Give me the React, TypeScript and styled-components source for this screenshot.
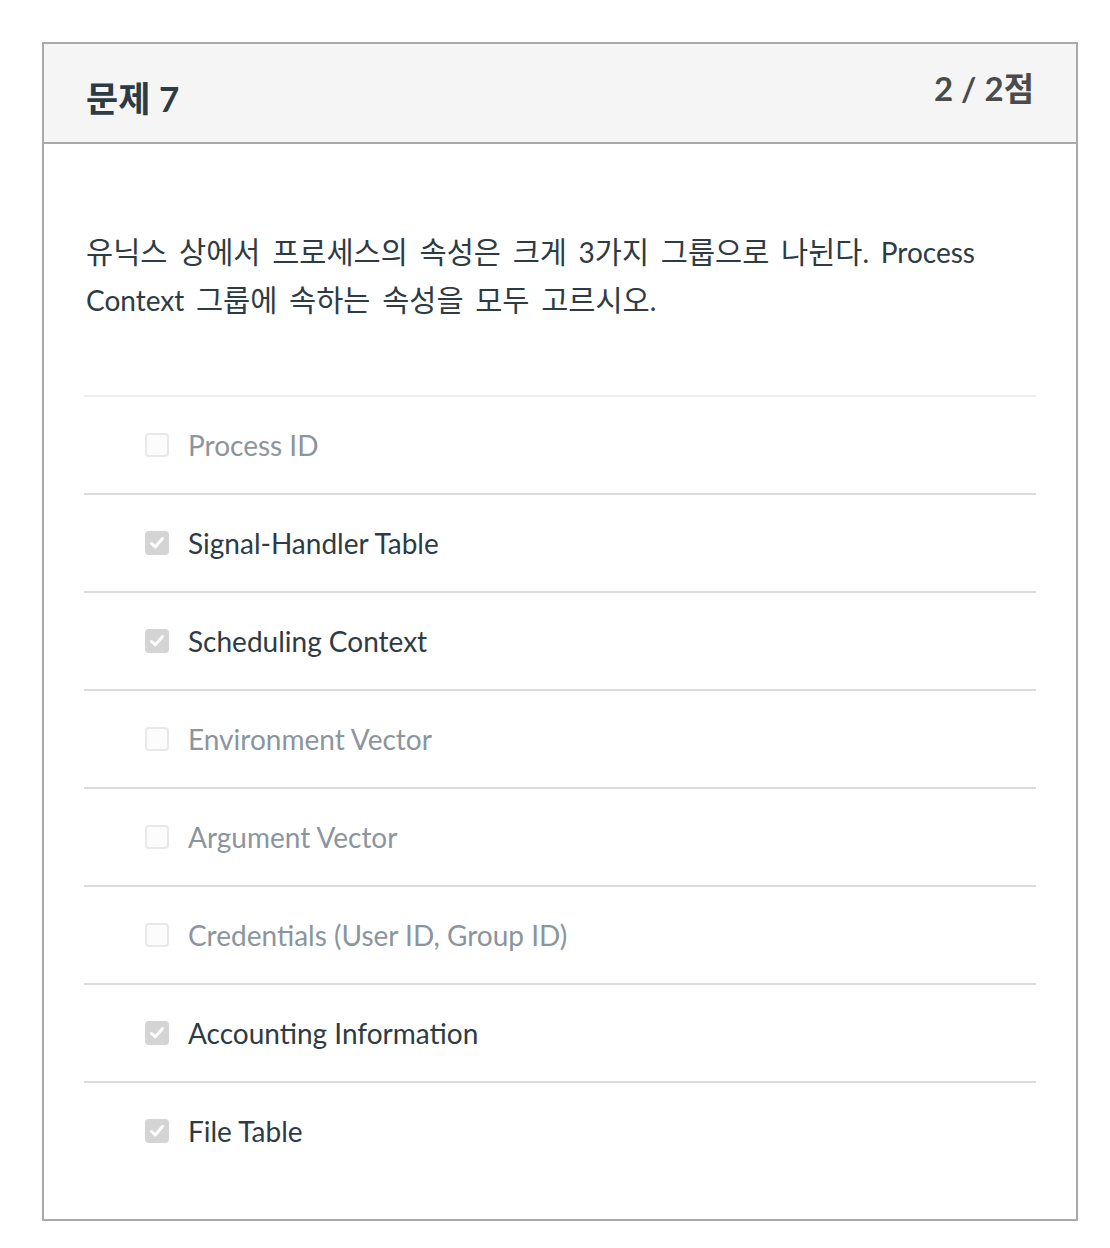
import { createGlobalStyle, styled } from 'styled-components';

interface Option {
    label: string;
    checked: boolean;
}

const question =
    '유닉스 상에서 프로세스의 속성은 크게 3가지 그룹으로 나뉜다. Process Context 그룹에 속하는 속성을 모두 고르시오.';

const options: Option[] = [
    { label: 'Process ID', checked: false },
    { label: 'Signal-Handler Table', checked: true },
    { label: 'Scheduling Context', checked: true },
    { label: 'Environment Vector', checked: false },
    { label: 'Argument Vector', checked: false },
    { label: 'Credentials (User ID, Group ID)', checked: false },
    { label: 'Accounting Information', checked: true },
    { label: 'File Table', checked: true },
];

// 한글 부분만 따로 감싸서 글자 크기를 맞춘다
function renderMixed(text: string) {
    return text.split(/([\uAC00-\uD7A3]+)/).map((part, index) =>
        /[\uAC00-\uD7A3]/.test(part) ? <HangulStyle key={index}>{part}</HangulStyle> : part
    );
}

function App() {
    return (
        <>
            <GlobalStyle />
            <PageStyle>
                <CardStyle>
                    <HeaderStyle>
                        <TitleStyle>문제 7</TitleStyle>
                        <ScoreStyle>2 / 2점</ScoreStyle>
                    </HeaderStyle>
                    <BodyStyle>
                        <QuestionStyle>{renderMixed(question)}</QuestionStyle>
                        <OptionListStyle>
                            {options.map((option, index) => (
                                <OptionRowStyle key={option.label} $first={index === 0}>
                                    <CheckboxStyle $checked={option.checked}>
                                        {option.checked && (
                                            <svg width="18" height="18" viewBox="0 0 18 18">
                                                <polyline
                                                    points="3.5,9.5 7.2,13 14.5,4.5"
                                                    fill="none"
                                                    stroke="#fff"
                                                    strokeWidth="3"
                                                    strokeLinecap="round"
                                                    strokeLinejoin="round"
                                                />
                                            </svg>
                                        )}
                                    </CheckboxStyle>
                                    <LabelStyle $checked={option.checked}>{option.label}</LabelStyle>
                                </OptionRowStyle>
                            ))}
                        </OptionListStyle>
                    </BodyStyle>
                </CardStyle>
            </PageStyle>
        </>
    );
}

const GlobalStyle = createGlobalStyle`
    body {
        margin: 0;
        background: #fff;
        font-family: Lato, "Noto Sans CJK KR", sans-serif;
        color: #2d3b45;
    }
`;

const PageStyle = styled.div`
    padding: 42px 0 0 42px;
`;

const CardStyle = styled.div`
    width: 1036px;
    box-sizing: border-box;
    border: 2px solid #a9a9a9;
    background: #fff;
`;

const HeaderStyle = styled.div`
    display: flex;
    justify-content: space-between;
    align-items: flex-start;
    height: 98px;
    padding: 0 42px 0 42px;
    background: #f5f5f5;
    border-bottom: 2px solid #a9a9a9;
`;

const TitleStyle = styled.h2`
    margin: 33px 0 0;
    font-size: 35px;
    font-weight: 700;
    line-height: 42px;
    color: #2d3b45;
`;

const ScoreStyle = styled.div`
    margin-top: 25px;
    font-size: 33px;
    font-weight: 700;
    line-height: 38px;
    color: #4b4b4b;
`;

const BodyStyle = styled.div`
    padding: 84px 40px 40px 40px;
`;

const QuestionStyle = styled.p`
    margin: 0 0 71px 2px;
    font-size: 28px;
    line-height: 48px;
    word-spacing: 4.5px;
    color: #2d3b45;
`;

const HangulStyle = styled.span`
    font-size: 29.5px;
    line-height: 1;
`;

const OptionListStyle = styled.div`
    display: flex;
    flex-direction: column;
`;

const OptionRowStyle = styled.div<{ $first: boolean }>`
    display: flex;
    align-items: center;
    height: 96px;
    padding-left: 61px;
    border-top: 2px solid ${({ $first }) => ($first ? '#ededed' : '#dcdcdc')};
`;

const CheckboxStyle = styled.span<{ $checked: boolean }>`
    display: flex;
    align-items: center;
    justify-content: center;
    width: 24px;
    height: 24px;
    box-sizing: border-box;
    border-radius: 4px;
    margin-right: 19px;
    background: ${({ $checked }) => ($checked ? '#d4d4d4' : '#fcfcfc')};
    border: 2px solid ${({ $checked }) => ($checked ? '#d4d4d4' : '#e8e8e8')};
`;

const LabelStyle = styled.span<{ $checked: boolean }>`
    font-size: 28px;
    line-height: 36px;
    color: ${({ $checked }) => ($checked ? '#2d3b45' : '#8b959e')};
`;

export default App;
